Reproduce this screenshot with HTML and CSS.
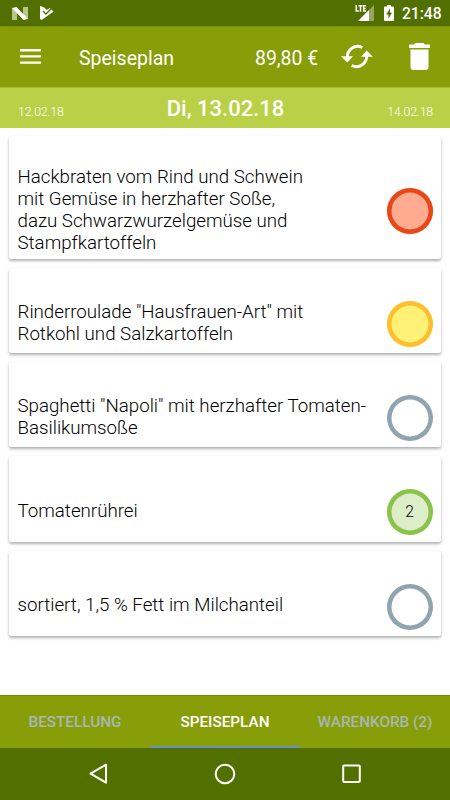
FILE: index.html
```html
<!DOCTYPE html>
<html lang="de">
<head>
<meta charset="utf-8">
<title>Speiseplan</title>
<link rel="stylesheet" href="styles.css">
</head>
<body>
<div class="app">
  <div class="status">
    <svg class="status-n" width="16" height="13" viewBox="0 0 16 13"><path fill="#b5c78d" d="M0 1h5v12H0zM11 0h5v12h-5z"/><path fill="#fff" d="M0 1 4.500 0 16 12l-4.500 1z"/></svg>
    <svg class="status-check" width="14" height="14" viewBox="0 0 14 14"><path fill="#fff" d="M1 0 5 2 6.500 4 10 2l3.500 3.500L2.500 13.500Q0 14.500 0 12V1Q0 0 1 0z"/><path fill="none" stroke="#527000" stroke-width="1.400" d="m3 5 3 3 6-6"/></svg>
    <svg class="status-lte" width="20" height="18" viewBox="0 0 20 18"><path fill="#92a565" d="M19 2v16H3z"/><path fill="#527000" d="M0 0h12v9H0z"/><path fill="#fff" d="M14 7v11H3z"/><path fill="none" stroke="#fff" stroke-width="1.500" d="M1.200 2v6H3.800M3.500 2.800h4M5.500 2.800v6M11 2.800H8.700v5.300H11M8.700 5.400h2"/></svg>
    <svg class="status-battery" width="10" height="16" viewBox="0 0 10 16"><path fill="#fff" d="M3 0h4v1.500h2q1 0 1 1V15q0 1-1 1H1q-1 0-1-1V2.500q0-1 1-1h2z"/><path fill="#527000" d="M6 3.500 2.200 9.400h2.200v4.300L8 7.700H6z"/></svg>
    <span class="clock">21:48</span>
  </div>
  <header class="toolbar">
    <svg class="menu" width="21" height="15" viewBox="0 0 21 15"><path fill="#fff" d="M0 0h21v2.400H0zM0 6.200h21v2.400H0zM0 12.400h21v2.400H0z"/></svg>
    <h1>Speiseplan</h1>
    <span class="balance">89,80 €</span>
    <svg class="refresh" width="32" height="25" viewBox="0 0 32 25"><path fill="none" stroke="#fff" stroke-width="2.900" d="M6.200 14C6 6 13.500-.5 21.300 3.500M25.800 11C26 19 18.500 25.500 10.700 21.500"/><path fill="#fff" d="M0 12.300h12L6.300 18.500zM20 12.700 25.700 6.500l6.100 6.200z"/></svg>
    <svg class="trash" width="21" height="27" viewBox="0 0 21 27"><path fill="#fff" d="M6.500 0h8l1.500 1.500h5V5H0V1.500h5zM1.500 6.500h18V24q0 3-3 3h-12q-3 0-3-3z"/></svg>
  </header>
  <nav class="days">
    <span class="day">12.02.18</span>
    <strong>Di, 13.02.18</strong>
    <span class="day next">14.02.18</span>
  </nav>
  <main class="meals">
    <article class="card tall"><p>Hackbraten vom Rind und Schwein<br>mit Gemüse in herzhafter Soße,<br>dazu Schwarzwurzelgemüse und<br>Stampfkartoffeln</p><span class="dot red"></span></article>
    <article class="card"><p>Rinderroulade "Hausfrauen-Art" mit<br>Rotkohl und Salzkartoffeln</p><span class="dot yellow"></span></article>
    <article class="card"><p>Spaghetti "Napoli" mit herzhafter Tomaten-<br>Basilikumsoße</p><span class="dot"></span></article>
    <article class="card single"><p>Tomatenrührei</p><span class="dot green">2</span></article>
    <article class="card single"><p>sortiert, 1,5 % Fett im Milchanteil</p><span class="dot"></span></article>
  </main>
  <nav class="tabs">
    <span class="tab">BESTELLUNG</span>
    <span class="tab active">SPEISEPLAN</span>
    <span class="tab">WARENKORB (2)</span>
  </nav>
  <div class="system">
    <svg width="20" height="22" viewBox="0 0 20 22"><path fill="none" stroke="#fff" stroke-width="2" stroke-linejoin="round" d="M18 1.700v18L2.500 10.700z"/></svg>
    <svg width="22" height="22" viewBox="0 0 22 22"><circle cx="11" cy="11" r="9.300" fill="none" stroke="#fff" stroke-width="2"/></svg>
    <svg width="20" height="20" viewBox="0 0 20 20"><rect x="1.200" y="1.500" width="16.600" height="16.600" rx="1" fill="none" stroke="#fff" stroke-width="2"/></svg>
  </div>
</div>
</body>
</html>
```
FILE: styles.css
```css
* { box-sizing: border-box; }
body { margin: 0; font-family: Roboto, sans-serif; background: #fff; }
svg { display: block; flex: none; }
.app { width: 450px; height: 800px; display: flex; flex-direction: column; overflow: hidden; }
.status { height: 26px; background: #527000; display: flex; padding-left: 12px; color: #fff; }
.status-n { margin-top: 7px; }
.status-check { margin: 6px 0 0 12px; }
.status-lte { margin: 3px 0 0 301px; }
.status-battery { margin: 5px 0 0 9px; }
.clock { margin-left: 8px; font-size: 15.6px; line-height: 28px; font-weight: 500; white-space: nowrap; }
.toolbar { height: 61px; background: #889e08; display: flex; color: #fff; border-top: 1px solid #789000; padding-left: 20px; }
.menu { margin-top: 22px; }
h1 { margin: 0 0 0 38px; width: 176px; font-size: 19.5px; font-weight: 400; line-height: 64px; }
.balance { width: 86px; font-size: 19.4px; line-height: 64px; white-space: nowrap; }
.refresh { margin-top: 17px; }
.trash { margin: 16px 0 0 36px; }
.days { height: 41px; flex: none; background: #bad147; border-top: 1px solid #a5bb2d; display: flex; justify-content: space-between; padding: 0 17px 0 18px; color: #fff; }
.day { width: 80px; font-size: 12.3px; font-weight: 300; line-height: 49px; letter-spacing: -.15px; }
.next { text-align: right; }
.days strong { font-size: 22px; font-weight: 500; line-height: 42px; white-space: nowrap; }
.meals { flex: 1; padding: 8px 9px 0; display: flex; flex-direction: column; gap: 9px; }
.card { height: 85.2px; flex: none; display: flex; justify-content: space-between; align-items: center; padding: 27px 8.5px 0 8.5px; border-radius: 2px; background: #fff; box-shadow: 0 2px 3px rgba(0,0,0,.3), 0 0 1px rgba(0,0,0,.12); }
.tall { height: 123px; }
.card p { margin: -2px 0 0; font-size: 18.72px; font-weight: 300; line-height: 22px; color: #000; white-space: nowrap; }
.card.single p { margin-top: -3px; }
.dot { width: 46px; height: 46px; flex: none; display: flex; align-items: center; justify-content: center; box-shadow: inset 0 0 0 4.5px #8fa4ae; border-radius: 50%; font-size: 15.6px; font-weight: 300; }
.red { box-shadow: inset 0 0 0 4.5px #e84817; background: #ffab91; }
.yellow { box-shadow: inset 0 0 0 4.5px #fdbf2d; background: #fff176; }
.green { box-shadow: inset 0 0 0 4.5px #8bc34a; background: #dcedc8; }
.tabs { height: 53px; display: flex; background: #889e08; border-top: 1px solid #748b00; }
.tab { width: 150px; padding-top: 1px; border-bottom: 2px solid transparent; text-align: center; font-size: 15.3px; font-weight: 500; line-height: 51px; color: #aab7b5; white-space: nowrap; }
.active { color: #fff; border-color: #698fc3; }
.system { height: 52px; background: #527000; display: flex; align-items: center; justify-content: space-between; padding: 0 88px; }
```
